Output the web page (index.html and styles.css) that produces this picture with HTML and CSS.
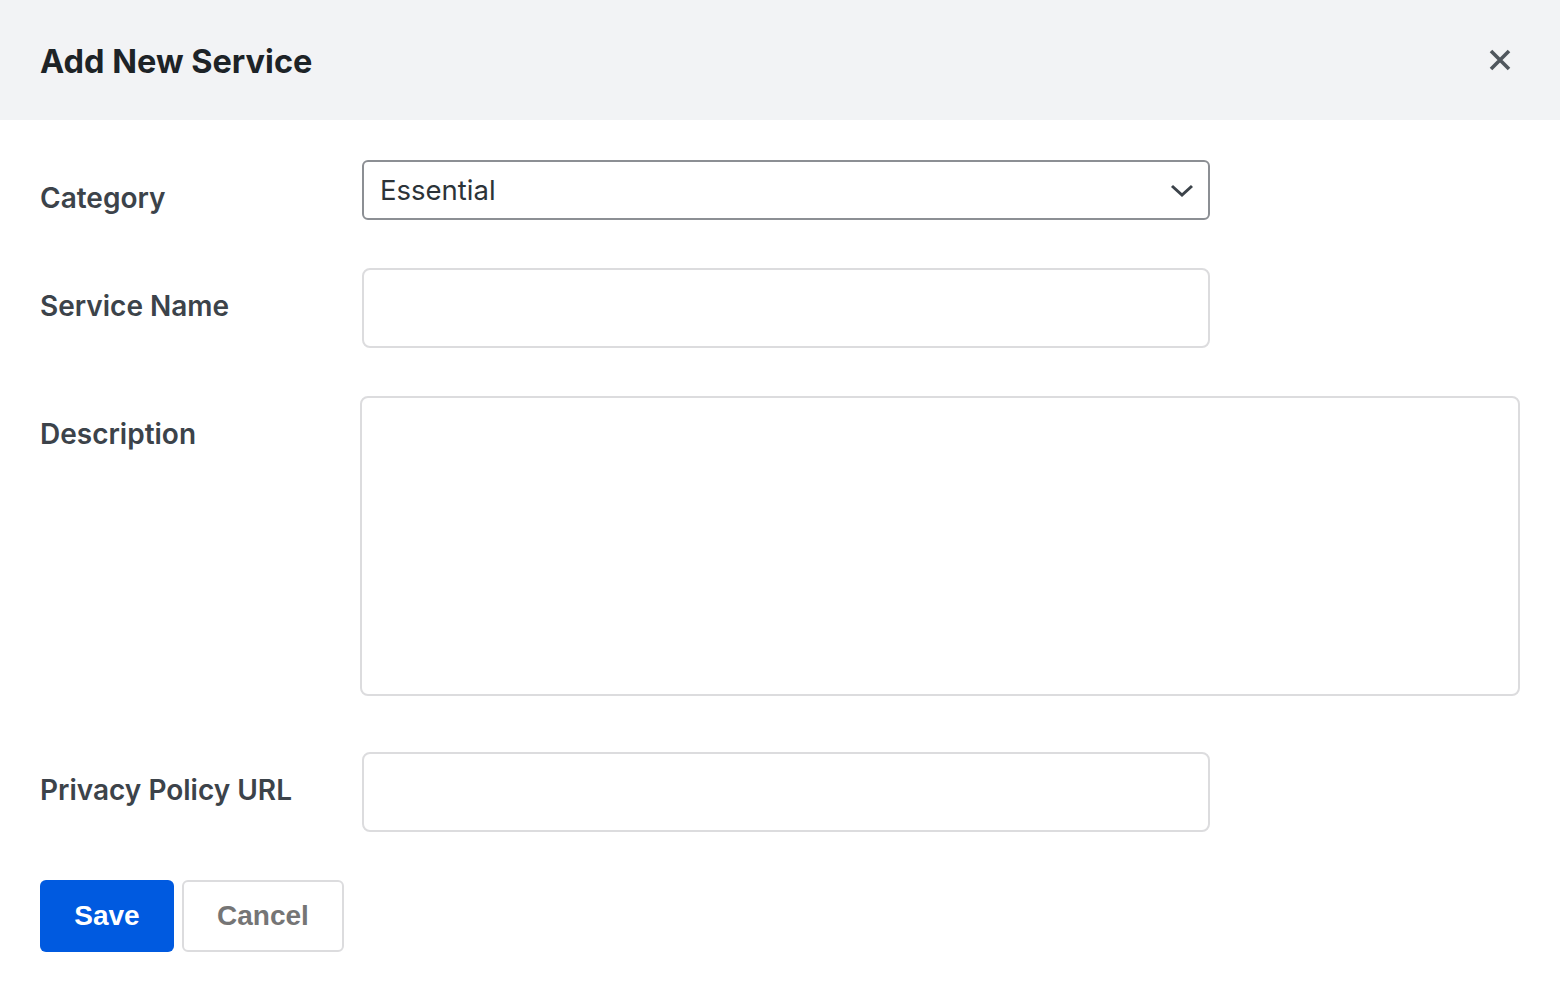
FILE: index.html
```html
<!DOCTYPE html>
<html lang="en">
<head>
<meta charset="utf-8">
<title>Add New Service</title>
<link rel="stylesheet" href="styles.css">
</head>
<body>
<div class="modal">
  <header class="modal-header">
    <h1 class="modal-title">Add New Service</h1>
    <button class="close-btn" type="button" aria-label="Close">
      <svg width="24" height="24" viewBox="0 0 24 24"><path d="M3 3 L21 21 M21 3 L3 21" stroke="#50575e" stroke-width="3.6" stroke-linecap="butt" fill="none"/></svg>
    </button>
  </header>
  <form class="modal-body">
    <div class="form-row">
      <label class="form-label">Category</label>
      <div class="select">
        <span class="select-value">Essential</span>
        <svg class="chevron" width="24" height="14" viewBox="0 0 24 14"><path d="M2 2 L12 11 L22 2" stroke="#3c434a" stroke-width="3" fill="none"/></svg>
      </div>
    </div>
    <div class="form-row">
      <label class="form-label">Service Name</label>
      <div class="input"></div>
    </div>
    <div class="form-row row-desc">
      <label class="form-label">Description</label>
      <div class="textarea"></div>
    </div>
    <div class="form-row">
      <label class="form-label">Privacy Policy URL</label>
      <div class="input"></div>
    </div>
    <div class="actions">
      <button type="button" class="btn btn-primary">Save</button>
      <button type="button" class="btn btn-secondary">Cancel</button>
    </div>
  </form>
</div>
</body>
</html>
```
FILE: styles.css
```css
html, body {
  margin: 0;
  padding: 0;
  background: #ffffff;
}
body {
  font-family: Inter, "Noto Sans", sans-serif;
  width: 1560px;
  height: 992px;
  overflow: hidden;
}
.modal-header {
  height: 120px;
  background: #f2f3f5;
  display: flex;
  align-items: center;
  justify-content: space-between;
  padding: 0 40px;
  box-sizing: border-box;
}
.modal-title {
  margin: 0;
  font-size: 32.5px;
  font-weight: 700;
  color: #1d2327;
  letter-spacing: 0;
  position: relative;
  top: 1px;
}
.close-btn {
  background: none;
  border: 0;
  padding: 0;
  width: 24px;
  height: 24px;
  margin-right: 8px;
  display: flex;
}
.modal-body {
  padding: 40px 40px 0 40px;
  display: flex;
  flex-direction: column;
}
.form-row {
  display: grid;
  grid-template-columns: 322px 1fr;
  align-items: start;
  margin-bottom: 48px;
}
.row-desc {
  margin-bottom: 56px;
}
.form-label {
  font-size: 28px;
  font-weight: 600;
  color: #3c434a;
  line-height: 36px;
  padding-top: 20px;
}
.select {
  width: 848px;
  height: 60px;
  box-sizing: border-box;
  border: 2px solid #8c8f94;
  border-radius: 6px;
  display: flex;
  align-items: center;
  justify-content: space-between;
  padding: 0 14px 0 16px;
}
.select-value {
  font-size: 27.5px;
  color: #2c3338;
  font-weight: 400;
}
.chevron {
  margin-top: 2px;
}
.input {
  width: 848px;
  height: 80px;
  box-sizing: border-box;
  border: 2px solid #dcdcde;
  border-radius: 8px;
}
.textarea {
  width: 1160px;
  height: 300px;
  margin-left: -2px;
  box-sizing: border-box;
  border: 2px solid #dcdcde;
  border-radius: 8px;
}
.actions {
  display: flex;
  gap: 8px;
}
.btn {
  height: 72px;
  box-sizing: border-box;
  font-family: "Liberation Sans", Arial, sans-serif;
  font-size: 28px;
  font-weight: 700;
  border-radius: 6px;
  cursor: pointer;
}
.btn-primary {
  width: 134px;
  background: #005ae0;
  color: #ffffff;
  border: 0;
}
.btn-secondary {
  width: 162px;
  background: #ffffff;
  color: #757575;
  border: 2px solid #dcdcde;
}
```
